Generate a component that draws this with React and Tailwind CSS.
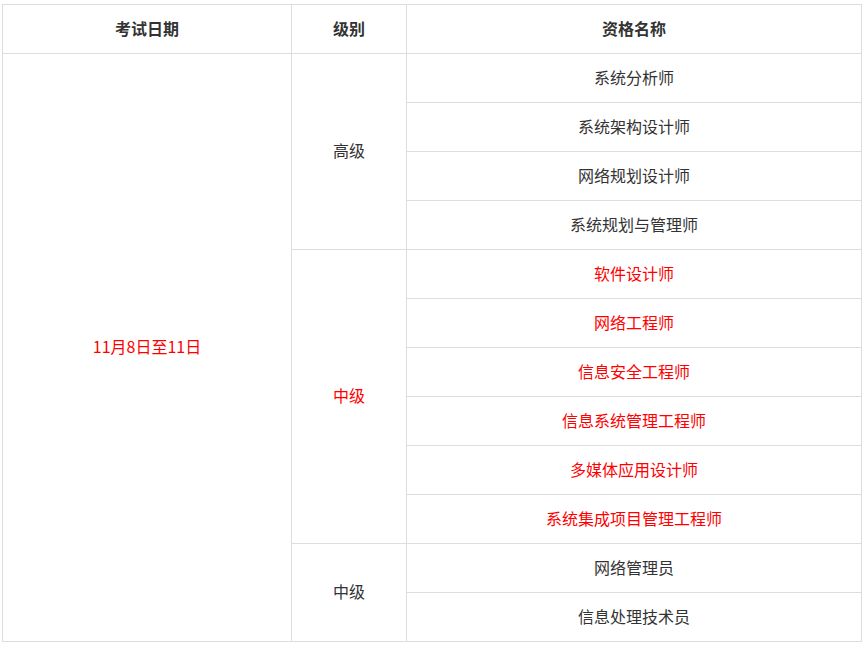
export default function App() {
  const rows = [
    { name: "系统分析师", red: false },
    { name: "系统架构设计师", red: false },
    { name: "网络规划设计师", red: false },
    { name: "系统规划与管理师", red: false },
    { name: "软件设计师", red: true },
    { name: "网络工程师", red: true },
    { name: "信息安全工程师", red: true },
    { name: "信息系统管理工程师", red: true },
    { name: "多媒体应用设计师", red: true },
    { name: "系统集成项目管理工程师", red: true },
    { name: "网络管理员", red: false },
    { name: "信息处理技术员", red: false },
  ];
  const cell = "border border-[#dddddd] text-center align-middle p-0 pb-[3px] leading-[20px]";
  return (
    <div className="pt-[4px] pl-[2px] bg-white" style={{ fontFamily: '"Noto Sans CJK SC", "Noto Sans", sans-serif' }}>
      <table className="border-collapse w-[860px] text-[16px] text-[#333333] table-fixed">
        <colgroup>
          <col className="w-[289px]" />
          <col className="w-[115px]" />
          <col />
        </colgroup>
        <thead>
          <tr className="h-[49px]">
            <th className={cell + " font-bold"}>考试日期</th>
            <th className={cell + " font-bold"}>级别</th>
            <th className={cell + " font-bold"}>资格名称</th>
          </tr>
        </thead>
        <tbody>
          {rows.map((r, i) => (
            <tr key={i} className="h-[49px]">
              {i === 0 && (
                <td rowSpan={12} className={cell + " text-[#ff0000]"}>11月8日至11日</td>
              )}
              {i === 0 && <td rowSpan={4} className={cell}>高级</td>}
              {i === 4 && <td rowSpan={6} className={cell + " text-[#ff0000]"}>中级</td>}
              {i === 10 && <td rowSpan={2} className={cell}>中级</td>}
              <td className={cell + (r.red ? " text-[#ff0000]" : "")}>{r.name}</td>
            </tr>
          ))}
        </tbody>
      </table>
    </div>
  );
}
